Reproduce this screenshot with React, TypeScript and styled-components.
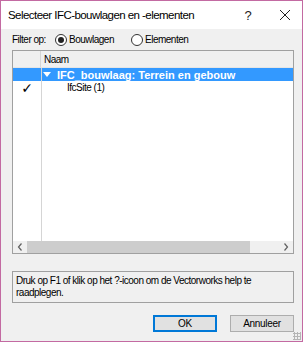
import React from "react"
import styled, { createGlobalStyle } from "styled-components"

const GlobalStyle = createGlobalStyle`
  html, body {
    margin: 0;
    padding: 0;
    background: #ffffff;
  }
  * {
    box-sizing: border-box;
  }
`

const uiFont = `"Liberation Sans", Arial, sans-serif`

// Window frame
const Window = styled.div`
  width: 303px;
  height: 342px;
  border: 1px solid #c36aa2;
  display: flex;
  flex-direction: column;
  font-family: ${uiFont};
  font-size: 10px;
  letter-spacing: -0.5px;
  color: #000;
  background: #f0f0f0;
  position: relative;
`

const TitleBar = styled.div`
  height: 28px;
  background: #ffffff;
  display: flex;
  align-items: center;
  padding-left: 7px;
`

const Title = styled.div`
  flex: 1;
  font-size: 11.5px;
  letter-spacing: -0.55px;
  color: #000;
  white-space: nowrap;
`

const TitleButton = styled.div<{ width: number }>`
  width: ${(p) => p.width}px;
  height: 28px;
  display: flex;
  align-items: center;
  justify-content: center;
  color: #222;
  font-size: 13px;
  letter-spacing: 0;
`

const Body = styled.div`
  flex: 1;
  display: flex;
  flex-direction: column;
  padding: 0 8px 0 11px;
`

const FilterRow = styled.div`
  display: flex;
  align-items: center;
  height: 21px;
  white-space: nowrap;
`

const FilterLabel = styled.span`
  width: 43px;
`

const RadioLabel = styled.label<{ width: number }>`
  display: flex;
  align-items: center;
  gap: 2px;
  width: ${(p) => p.width}px;
`

const RadioCircle = styled.span<{ checked?: boolean }>`
  width: 12px;
  height: 12px;
  border-radius: 50%;
  border: 1px solid #333;
  background: #fff;
  display: flex;
  align-items: center;
  justify-content: center;

  &::after {
    content: "";
    width: 6px;
    height: 6px;
    border-radius: 50%;
    background: ${(p) => (p.checked ? "#222" : "transparent")};
  }
`

const ListBox = styled.div`
  height: 204px;
  border: 1px solid #a0a0a0;
  background: #fff;
  display: flex;
  flex-direction: column;
`

const Rows = styled.div`
  flex: 1;
  display: grid;
  grid-template-columns: 28px 1fr;
  grid-auto-rows: min-content;
  position: relative;
`

const HeaderCell = styled.div<{ first?: boolean }>`
  height: 17px;
  background: #f0f0f0;
  border-right: ${(p) => (p.first ? "1px solid #d5d5d5" : "none")};
  border-bottom: 1px solid #e5e5e5;
  padding-left: 3px;
  display: flex;
  align-items: center;
`

const Cell = styled.div<{ selected?: boolean; first?: boolean }>`
  height: 13px;
  background: ${(p) => (p.selected ? "#3399ff" : "transparent")};
  color: ${(p) => (p.selected ? "#fff" : "#000")};
  font-weight: ${(p) => (p.selected ? "bold" : "normal")};
  font-size: ${(p) => (p.selected ? "11px" : "10px")};
  letter-spacing: ${(p) => (p.selected ? "0" : "-0.5px")};
  display: flex;
  align-items: center;
  justify-content: ${(p) => (p.first ? "center" : "flex-start")};
  white-space: nowrap;
`

const ColumnLine = styled.div`
  position: absolute;
  left: 28px;
  top: 17px;
  bottom: 0;
  border-left: 1px solid #d5d5d5;
`

const Triangle = styled.span`
  width: 0;
  height: 0;
  border-left: 4px solid transparent;
  border-right: 4px solid transparent;
  border-top: 5px solid #fff;
  margin: 0 6px 0 2px;
`

const Indent = styled.span`
  padding-left: 26px;
`

const Check = styled.span`
  font-size: 14px;
  font-family: "DejaVu Sans", sans-serif;
  letter-spacing: 0;
`

const HScroll = styled.div`
  height: 12px;
  background: #f0f0f0;
  display: flex;
  align-items: center;
`

const ScrollArrow = styled.div`
  width: 14px;
  height: 12px;
  display: flex;
  align-items: center;
  justify-content: center;
`

const Thumb = styled.div`
  flex: 1;
  height: 12px;
  background: #cdcdcd;
  margin-right: 29px;
`

const HelpBox = styled.div`
  margin-top: 17px;
  height: 32px;
  border: 1px solid #a0a0a0;
  padding: 3px 3px;
  line-height: 12px;
`

const ButtonRow = styled.div`
  display: flex;
  justify-content: flex-end;
  gap: 13px;
  margin-top: 12px;
`

const Button = styled.button<{ primary?: boolean }>`
  width: 64px;
  height: 17px;
  padding: 0;
  font-family: ${uiFont};
  font-size: 10px;
  letter-spacing: -0.3px;
  color: #000;
  background: #e1e1e1;
  border: ${(p) => (p.primary ? "2px solid #0078d7" : "1px solid #adadad")};
`

const Grip = styled.div`
  position: absolute;
  right: 1px;
  bottom: 1px;
  width: 8px;
  height: 8px;
  background-image: radial-gradient(#b5b5b5 1px, transparent 1.2px);
  background-size: 3px 3px;
`

const Chevron = ({ dir }: { dir: "left" | "right" }) => (
  <svg width="6" height="8" viewBox="0 0 6 8">
    <path
      d={dir === "left" ? "M4.5 0.5 L1.5 4 L4.5 7.5" : "M1.5 0.5 L4.5 4 L1.5 7.5"}
      fill="none"
      stroke="#606060"
      strokeWidth="1.2"
    />
  </svg>
)

const Radio = ({ label, checked, width }: { label: string; checked?: boolean; width: number }) => (
  <RadioLabel width={width}>
    <RadioCircle checked={checked} />
    {label}
  </RadioLabel>
)

const App = () => {
  return (
    <>
      <GlobalStyle />
      <Window>
        <TitleBar>
          <Title>Selecteer IFC-bouwlagen en -elementen</Title>
          <TitleButton width={40}>?</TitleButton>
          <TitleButton width={34}>
            <svg width="10" height="10" viewBox="0 0 10 10">
              <path d="M0 0 L10 10 M10 0 L0 10" stroke="#222" strokeWidth="1" />
            </svg>
          </TitleButton>
        </TitleBar>
        <Body>
          <FilterRow>
            <FilterLabel>Filter op:</FilterLabel>
            <Radio label="Bouwlagen" checked width={76} />
            <Radio label="Elementen" width={80} />
          </FilterRow>
          <ListBox>
            <Rows>
              <HeaderCell first />
              <HeaderCell>Naam</HeaderCell>
              <Cell selected first />
              <Cell selected>
                <Triangle />
                IFC_bouwlaag: Terrein en gebouw
              </Cell>
              <Cell first>
                <Check>✓</Check>
              </Cell>
              <Cell>
                <Indent>IfcSite (1)</Indent>
              </Cell>
              <ColumnLine />
            </Rows>
            <HScroll>
              <ScrollArrow>
                <Chevron dir="left" />
              </ScrollArrow>
              <Thumb />
              <ScrollArrow>
                <Chevron dir="right" />
              </ScrollArrow>
            </HScroll>
          </ListBox>
          <HelpBox>
            Druk op F1 of klik op het ?-icoon om de Vectorworks help te raadplegen.
          </HelpBox>
          <ButtonRow>
            <Button primary>OK</Button>
            <Button>Annuleer</Button>
          </ButtonRow>
        </Body>
        <Grip />
      </Window>
    </>
  )
}

export default App
